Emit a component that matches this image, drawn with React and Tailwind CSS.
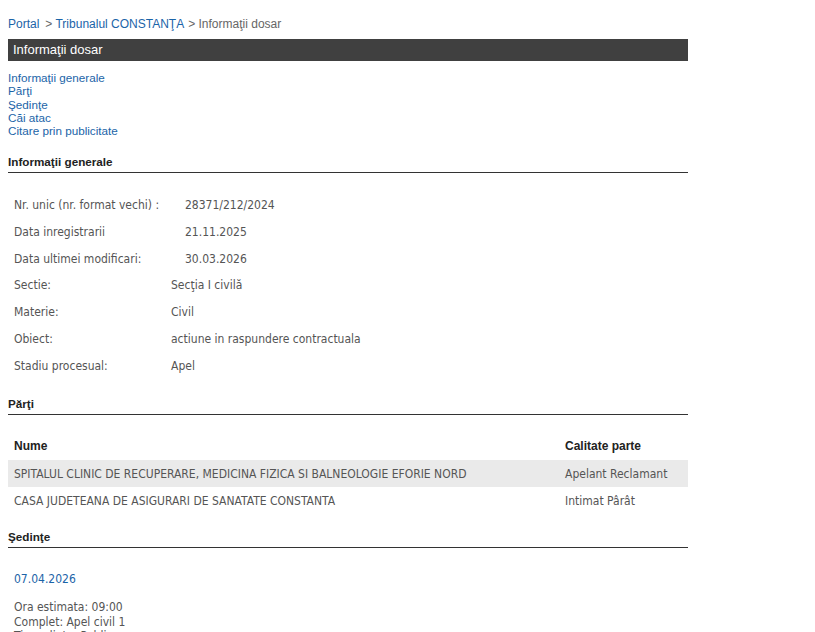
import React from "react";

const body = { fontFamily: '"DejaVu Sans Condensed", "DejaVu Sans", sans-serif' };

export default function App() {
  const info = [
    ["Nr. unic (nr. format vechi) :", "28371/212/2024", "w-[171px]"],
    ["Data inregistrarii", "21.11.2025", "w-[171px]"],
    ["Data ultimei modificari:", "30.03.2026", "w-[171px]"],
    ["Sectie:", "Secţia I civilă", "w-[157px]"],
    ["Materie:", "Civil", "w-[157px]"],
    ["Obiect:", "actiune in raspundere contractuala", "w-[157px]"],
    ["Stadiu procesual:", "Apel", "w-[157px]"],
  ];
  return (
    <div className="w-[815px] h-[632px] overflow-hidden bg-white font-['Liberation_Sans',Arial,sans-serif]">
      <div className="w-[680px] ml-[8px] pt-[17px]">
        <div className="text-[12px] leading-[14px] text-[#666]">
          <span className="text-[#1b64a8]">Portal</span>
          <span className="ml-[6px]">&gt; </span>
          <span className="text-[#1b64a8]">Tribunalul CONSTANŢA</span>
          <span className="ml-[4px]">&gt; Informaţii dosar</span>
        </div>
        <div className="mt-[8px] h-[22px] bg-[#404040] text-white text-[13px] leading-[22px] pl-[5px]">Informaţii dosar</div>
        <div className="mt-[10px] flex flex-col text-[11.7px] leading-[13.3px] text-[#1b64a8]">
          <span>Informaţii generale</span>
          <span>Părţi</span>
          <span>Şedinţe</span>
          <span>Căi atac</span>
          <span>Citare prin publicitate</span>
        </div>
        <div className="mt-[18px] border-b border-[#333] pb-[3px] text-[11.7px] font-bold text-[#222] leading-[14px]">Informaţii generale</div>
        <div className="mt-[18px] pl-[6px]" style={body}>
          {info.map(([k, v, w]) => (
            <div key={k} className="flex h-[26.83px] items-center text-[12px] text-[#555]">
              <div className={w}>{k}</div>
              <div>{v}</div>
            </div>
          ))}
        </div>
        <div className="mt-[18px] border-b border-[#333] pb-[3px] text-[11.7px] font-bold text-[#222] leading-[14px]">Părţi</div>
        <div className="mt-[17px]">
          <div className="flex h-[28px] items-center text-[12px] font-bold text-[#222] px-[6px]">
            <div className="w-[551px]">Nume</div>
            <div>Calitate parte</div>
          </div>
          <div className="flex h-[27px] items-center text-[12px] text-[#555] px-[6px] bg-[#eaeaea]" style={body}>
            <div className="w-[551px]">SPITALUL CLINIC DE RECUPERARE, MEDICINA FIZICA SI BALNEOLOGIE EFORIE NORD</div>
            <div>Apelant Reclamant</div>
          </div>
          <div className="flex h-[27px] items-center text-[12px] text-[#555] px-[6px]" style={body}>
            <div className="w-[551px]">CASA JUDETEANA DE ASIGURARI DE SANATATE CONSTANTA</div>
            <div>Intimat Pârât</div>
          </div>
        </div>
        <div className="mt-[16px] border-b border-[#333] pb-[3px] text-[11.7px] font-bold text-[#222] leading-[14px]">Şedinţe</div>
        <div className="pl-[6px] text-[12px]" style={body}>
          <div className="mt-[24px] text-[#1b64a8] leading-[14px]">07.04.2026</div>
          <div className="mt-[14px] text-[#555] leading-[14.5px]">
            <div>Ora estimata: 09:00</div>
            <div>Complet: Apel civil 1</div>
            <div>Tip sedinta: Publica</div>
          </div>
        </div>
      </div>
    </div>
  );
}
